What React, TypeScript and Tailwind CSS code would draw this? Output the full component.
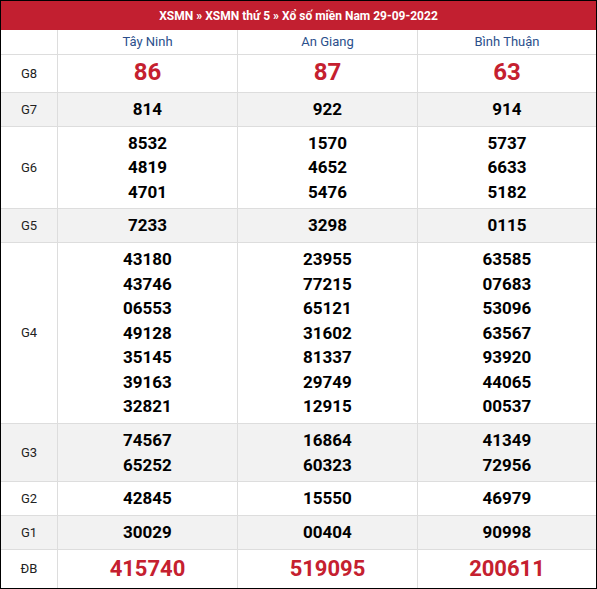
import React from "react";

type Row = {
  label: string;
  h: string;
  gray?: boolean;
  kind?: "g8" | "db";
  values: string[][];
};

const rows: Row[] = [
  { label: "G8", h: "h-[37px]", kind: "g8", values: [["86"], ["87"], ["63"]] },
  { label: "G7", h: "h-[33px]", gray: true, values: [["814"], ["922"], ["914"]] },
  {
    label: "G6",
    h: "h-[81px]",
    values: [
      ["8532", "4819", "4701"],
      ["1570", "4652", "5476"],
      ["5737", "6633", "5182"],
    ],
  },
  { label: "G5", h: "h-[33px]", gray: true, values: [["7233"], ["3298"], ["0115"]] },
  {
    label: "G4",
    h: "h-[180px]",
    values: [
      ["43180", "43746", "06553", "49128", "35145", "39163", "32821"],
      ["23955", "77215", "65121", "31602", "81337", "29749", "12915"],
      ["63585", "07683", "53096", "63567", "93920", "44065", "00537"],
    ],
  },
  {
    label: "G3",
    h: "h-[57px]",
    gray: true,
    values: [
      ["74567", "65252"],
      ["16864", "60323"],
      ["41349", "72956"],
    ],
  },
  { label: "G2", h: "h-[33px]", values: [["42845"], ["15550"], ["46979"]] },
  { label: "G1", h: "h-[33px]", gray: true, values: [["30029"], ["00404"], ["90998"]] },
  { label: "ĐB", h: "h-[38px]", kind: "db", values: [["415740"], ["519095"], ["200611"]] },
];

const provinces = ["Tây Ninh", "An Giang", "Bình Thuận"];

const numClass = (kind?: string) => {
  if (kind === "g8") return "text-[24px] leading-[28px] pb-[3px] font-bold text-[#c5202f]";
  if (kind === "db") return "text-[22px] leading-[28px] pb-[1px] font-bold text-[#c5202f]";
  return "text-[17px] leading-[24.6px] font-bold text-black";
};

const App = () => {
  return (
    <div
      className="w-[597px] h-[589px] bg-white border border-black overflow-hidden"
      style={{ fontFamily: "Roboto, 'Liberation Sans', sans-serif" }}
    >
      {/* Title */}
      <div className="h-[29px] bg-[#c21f30] flex items-center justify-center text-white text-[12px] font-bold">
        XSMN » XSMN thứ 5 » Xổ số miền Nam 29-09-2022
      </div>
      {/* Provinces */}
      <div className="grid grid-cols-[57px_180px_180px_178px] border-b border-[#dddddd]">
        <div className="h-[24px] border-r border-[#dddddd]"></div>
        {provinces.map((p, i) => (
          <div
            key={p}
            className={`h-[24px] flex items-center justify-center text-[13px] text-[#2b4f8c] ${
              i < 2 ? "border-r border-[#dddddd]" : ""
            }`}
          >
            {p}
          </div>
        ))}
      </div>
      {/* Prizes */}
      {rows.map((row, r) => (
        <div
          key={row.label}
          className={`grid grid-cols-[57px_180px_180px_178px] ${
            r < rows.length - 1 ? "border-b border-[#dddddd]" : ""
          } ${row.gray ? "bg-[#f2f2f2]" : "bg-white"}`}
        >
          <div
            className={`${row.h} border-r border-[#dddddd] flex items-center justify-center text-[13px] text-[#222222]`}
          >
            {row.label}
          </div>
          {row.values.map((col, c) => (
            <div
              key={c}
              className={`${row.h} flex flex-col items-center justify-center ${
                c < 2 ? "border-r border-[#dddddd]" : ""
              }`}
            >
              {col.map((v, k) => (
                <div key={k} className={numClass(row.kind)}>
                  {v}
                </div>
              ))}
            </div>
          ))}
        </div>
      ))}
    </div>
  );
};

export default App;
